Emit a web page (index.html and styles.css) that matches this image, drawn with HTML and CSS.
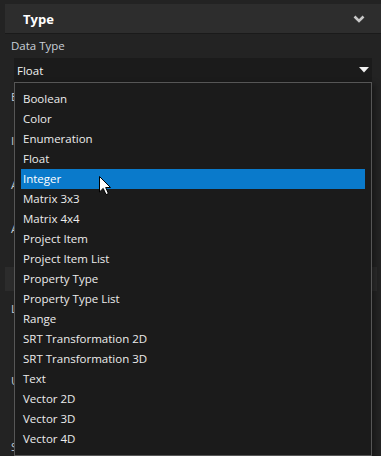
FILE: index.html
```html
<!DOCTYPE html>
<html lang="en">
<head>
    <meta charset="UTF-8">
    <title>Type Properties</title>
    <link rel="stylesheet" href="styles.css">
</head>
<body>
    <div class="panel">
        <div class="section-header">
            <span class="section-title">Type</span>
            <svg class="chevron" width="12" height="8" viewBox="0 0 12 8">
                <path d="M1.5 1.5 L6 6 L10.5 1.5" fill="none" stroke="#c8c8c8" stroke-width="2.6"/>
            </svg>
        </div>

        <div class="fields">
            <div class="field-label">Data Type</div>
            <div class="select-wrap">
                <div class="select">
                    <span>Float</span>
                    <svg class="caret" width="10" height="6" viewBox="0 0 10 6">
                        <path d="M0 0 H10 L5 5.5 Z" fill="#f0f0f0"/>
                    </svg>
                </div>

                <ul class="dropdown">
                    <li>Boolean</li>
                    <li>Color</li>
                    <li>Enumeration</li>
                    <li>Float</li>
                    <li class="active">Integer</li>
                    <li>Matrix 3x3</li>
                    <li>Matrix 4x4</li>
                    <li>Project Item</li>
                    <li>Project Item List</li>
                    <li>Property Type</li>
                    <li>Property Type List</li>
                    <li>Range</li>
                    <li>SRT Transformation 2D</li>
                    <li>SRT Transformation 3D</li>
                    <li>Text</li>
                    <li>Vector 2D</li>
                    <li>Vector 3D</li>
                    <li>Vector 4D</li>
                </ul>

                <svg class="cursor" width="13" height="20" viewBox="0 0 13 20">
                    <path d="M0.5 0.5 L0.5 16 L4.2 12.4 L7 18.6 L9.4 17.5 L6.7 11.5 L11.5 11.5 Z" fill="#fff" stroke="#000" stroke-width="1"/>
                </svg>
            </div>

            <!-- fields hidden behind the open list -->
            <div class="field-label behind first">E</div>
            <div class="field-label behind">I</div>
            <div class="field-label behind">A</div>
            <div class="field-label behind">A</div>
            <div class="field-bar"></div>
            <div class="field-label behind">L</div>
            <div class="field-label behind tall">U</div>
            <div class="field-label behind last">S</div>
        </div>
    </div>
</body>
</html>
```

FILE: styles.css
```css
* {
    margin: 0;
    padding: 0;
    box-sizing: border-box;
}

body {
    background: #232323;
    font-family: 'Open Sans', 'Noto Sans', sans-serif;
    font-size: 11.5px;
    color: #e6e6e6;
    width: 381px;
    height: 456px;
    overflow: hidden;
}

.panel {
    padding-top: 4px;
}

.section-header {
    margin-left: 5px;
    height: 30px;
    background: #2d2d2d;
    border-bottom: 1px solid #1a1a1a;
    display: flex;
    align-items: center;
    justify-content: space-between;
    padding: 0 16px 0 18px;
}

.section-title {
    font-weight: bold;
    font-size: 13px;
    color: #fff;
}

.chevron {
    margin-top: 1px;
}

.fields {
    padding: 4px 0 0 11px;
}

.field-label {
    height: 16px;
    line-height: 16px;
    color: #c9d0d8;
}

.select-wrap {
    position: relative;
    margin: 4px 9px 0 3px;
}

.select {
    height: 24px;
    background: #1b1b1b;
    display: flex;
    align-items: center;
    justify-content: space-between;
    padding: 0 3px 0 3px;
    color: #f2f2f2;
}

.caret {
    margin-top: -1px;
}

.dropdown {
    position: absolute;
    top: 24px;
    left: 0;
    right: 0;
    height: 374px;
    list-style: none;
    background: #1b1b1b;
    border: 1px solid #565656;
    padding: 6px 6px;
    box-shadow: 3px 2px 6px rgba(0, 0, 0, 0.35);
    z-index: 2;
}

.dropdown li {
    height: 20px;
    line-height: 20px;
    padding-left: 2px;
    color: #ececec;
}

.dropdown li.active {
    background: #0a7acb;
    color: #fff;
}

.cursor {
    position: absolute;
    left: 85px;
    top: 118px;
    z-index: 3;
}

.behind {
    margin-top: 28px;
}

.behind.first {
    margin-top: 7px;
}

.behind.tall {
    margin-top: 56px;
}

.behind.last {
    margin-top: 50px;
}

.field-bar {
    margin: 30px 4px 0 -6px;
    height: 24px;
    background: #2c2c2c;
}

.field-bar + .behind {
    margin-top: 10px;
}
```
